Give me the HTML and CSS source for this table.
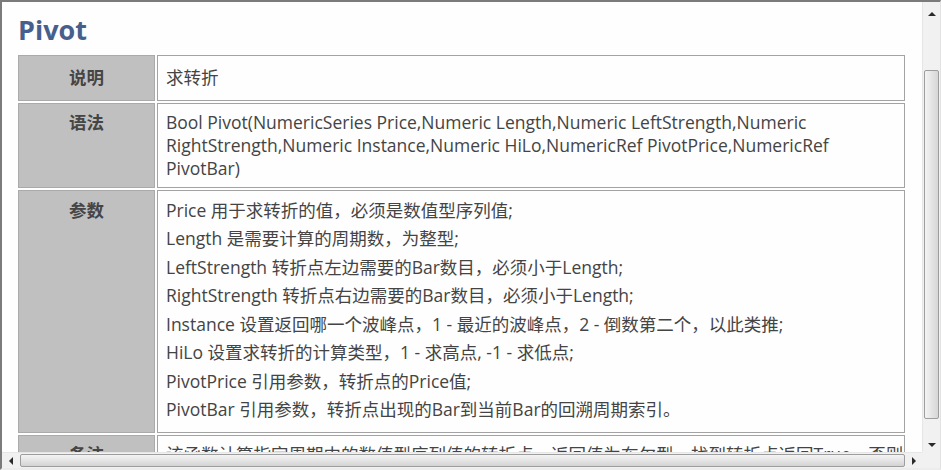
FILE: index.html
```html
<!DOCTYPE html>
<html lang="zh-CN">
<head>
<meta charset="utf-8">
<title>Pivot</title>
<link rel="stylesheet" href="styles.css">
</head>
<body>
<div class="window">
  <div class="viewport">
    <div class="page">
      <h1 class="title">Pivot</h1>
      <table class="doc">
        <tr class="row-desc">
          <th class="label">说明</th>
          <td class="content">求转折</td>
        </tr>
        <tr class="row-syntax">
          <th class="label">语法</th>
          <td class="content">Bool Pivot(NumericSeries Price,Numeric Length,Numeric LeftStrength,Numeric<br>RightStrength,Numeric Instance,Numeric HiLo,NumericRef PivotPrice,NumericRef<br>PivotBar)</td>
        </tr>
        <tr class="row-params">
          <th class="label">参数</th>
          <td class="content">
            <div class="param">Price 用于求转折的值，必须是数值型序列值;</div>
            <div class="param">Length 是需要计算的周期数，为整型;</div>
            <div class="param">LeftStrength 转折点左边需要的Bar数目，必须小于Length;</div>
            <div class="param">RightStrength 转折点右边需要的Bar数目，必须小于Length;</div>
            <div class="param">Instance 设置返回哪一个波峰点，1 - 最近的波峰点，2 - 倒数第二个，以此类推;</div>
            <div class="param">HiLo 设置求转折的计算类型，1 - 求高点, -1 - 求低点;</div>
            <div class="param">PivotPrice 引用参数，转折点的Price值;</div>
            <div class="param">PivotBar 引用参数，转折点出现的Bar到当前Bar的回溯周期索引。</div>
          </td>
        </tr>
        <tr class="row-notes">
          <th class="label">备注</th>
          <td class="content">该函数计算指定周期中的数值型序列值的转折点，返回值为布尔型，找到转折点返回True，否则返回False。</td>
        </tr>
      </table>
    </div>
  </div>
  <div class="vscroll">
    <div class="arrow-btn"><span class="tri tri-up"></span></div>
    <div class="vtrack"><div class="vthumb"></div></div>
    <div class="arrow-btn"><span class="tri tri-down"></span></div>
  </div>
  <div class="hscroll">
    <div class="arrow-btn h"><span class="tri tri-left"></span></div>
    <div class="htrack"><div class="hthumb"></div></div>
    <div class="arrow-btn h"><span class="tri tri-right"></span></div>
  </div>
  <div class="corner"></div>
</div>
</body>
</html>
```

FILE: styles.css
```css
html, body {
  margin: 0;
  padding: 0;
  background: #ffffff;
}

.window {
  width: 941px;
  height: 470px;
  box-sizing: border-box;
  border-top: 2px solid #7b7b7b;
  border-left: 2px solid #7b7b7b;
  border-right: 1px solid #e2e2e2;
  border-bottom: 2px solid #ececec;
  display: grid;
  grid-template-columns: 920px 18px;
  grid-template-rows: 450px 16px;
  overflow: hidden;
}

.viewport {
  overflow: hidden;
  background: #fefefe;
}

.page {
  padding: 0 0 0 14px;
  font-family: "Open Sans", "Noto Sans CJK SC", sans-serif;
  font-size: 17.5px;
  color: #444444;
}

.title {
  margin: 12px 0 7px 2px;
  font-family: "Open Sans", sans-serif;
  font-size: 27px;
  line-height: 32px;
  font-weight: 700;
  color: #46608d;
}

.doc {
  width: 891px;
  border-collapse: separate;
  border-spacing: 2px;
  table-layout: fixed;
}

.label {
  width: 135px;
  background: #c0c0c0;
  border: 1px solid #aaaaaa;
  font-weight: 700;
  color: #454545;
  text-align: center;
  vertical-align: top;
  line-height: 23px;
  padding: 7px 0;
}

.content {
  border: 1px solid #a3a3a3;
  background: #fefefe;
  vertical-align: top;
  line-height: 23px;
  padding: 7px 8px;
  white-space: nowrap;
  overflow: hidden;
}

.row-desc .label,
.row-desc .content {
  padding-top: 10px;
  padding-bottom: 11px;
}

.row-params .label,
.row-params .content {
  padding-top: 7.5px;
  padding-bottom: 11px;
}

.param {
  line-height: 23px;
}

.param + .param {
  margin-top: 5.5px;
}

.row-notes .label,
.row-notes .content {
  padding-top: 7px;
}

/* scrollbars */
.vscroll {
  background: #f1f1f1;
  border-left: 1px solid #e6e6e6;
  display: flex;
  flex-direction: column;
}

.arrow-btn {
  height: 17px;
  flex: none;
  display: flex;
  align-items: center;
  justify-content: center;
}

.arrow-btn.h {
  width: 17px;
  height: auto;
}

.vtrack {
  flex: 1;
  display: flex;
  flex-direction: column;
  padding: 51px 1px 16px 1px;
}

.vthumb {
  flex: 1;
  border: 1px solid #9d9d9d;
  border-radius: 2px;
  background: linear-gradient(to right, #f4f4f4 0%, #e6e6e6 45%, #d6d6d6 100%);
}

.hscroll {
  background: #f1f1f1;
  border-top: 1px solid #e6e6e6;
  display: flex;
}

.htrack {
  flex: 1;
  display: flex;
  padding: 1px 0 1px 1px;
}

.hthumb {
  flex: 1;
  border: 1px solid #9d9d9d;
  border-radius: 2px;
  background: linear-gradient(to bottom, #f4f4f4 0%, #e6e6e6 45%, #d3d3d3 100%);
}

.corner {
  background: #f1f1f1;
}

.tri {
  width: 0;
  height: 0;
  display: block;
}

.tri-up {
  border-left: 4px solid transparent;
  border-right: 4px solid transparent;
  border-bottom: 4px solid #2a2a2a;
  margin-top: 6px;
}

.tri-down {
  border-left: 4px solid transparent;
  border-right: 4px solid transparent;
  border-top: 4px solid #2a2a2a;
  margin-top: 2px;
}

.tri-left {
  border-top: 4px solid transparent;
  border-bottom: 4px solid transparent;
  border-right: 4px solid #2a2a2a;
}

.tri-right {
  border-top: 4px solid transparent;
  border-bottom: 4px solid transparent;
  border-left: 4px solid #2a2a2a;
}
```
